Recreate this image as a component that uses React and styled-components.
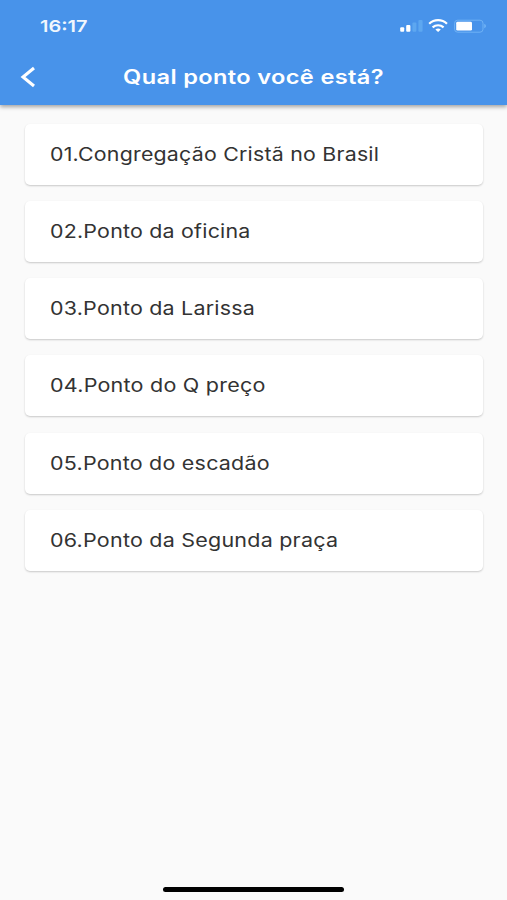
import React from 'react';
import styled, { createGlobalStyle } from 'styled-components';

const points = [
  { id: 1, title: '01.Congregação Cristã no Brasil', stretch: 1.147 },
  { id: 2, title: '02.Ponto da oficina', stretch: 1.149 },
  { id: 3, title: '03.Ponto da Larissa', stretch: 1.152 },
  { id: 4, title: '04.Ponto do Q preço', stretch: 1.157 },
  { id: 5, title: '05.Ponto do escadão', stretch: 1.154 },
  { id: 6, title: '06.Ponto da Segunda praça', stretch: 1.155 },
];

function StatusIcons() {
  return (
    <styles.StatusIcons viewBox="0 0 88 16" aria-hidden="true">
      <g fill="#fff">
        <rect x="1.2" y="9.2" width="4" height="4.6" rx="1" />
        <rect x="7.2" y="7" width="4.2" height="6.8" rx="1" />
        <rect x="13.4" y="4.4" width="4" height="9.4" rx="1" fill="#5da7f0" />
        <rect x="19.4" y="2" width="4.2" height="11.8" rx="1" fill="#5da7f0" />
      </g>
      <g fill="none" stroke="#fff" strokeWidth="2.2">
        <path d="M30.2 5.8C35.2 1 43 1 48 5.8" />
        <path d="M33.6 9.4C36.8 6.5 41.4 6.5 44.6 9.4" />
      </g>
      <path d="M36.4 11.5C38 10.1 40.2 10.1 41.8 11.5L39.1 13.9Z" fill="#fff" />
      <rect x="55.6" y="2.2" width="28.4" height="12" rx="3" fill="none" stroke="#6fb2f5" />
      <rect x="57.2" y="3.8" width="15.8" height="8.8" rx="1.4" fill="#fff" />
      <path d="M85.2 6C87.6 6.6 87.6 9.6 85.2 10.2Z" fill="#6fb2f5" />
    </styles.StatusIcons>
  );
}

function App() {
  return (
    <styles.Screen>
      <GlobalStyle />
      <styles.Header>
        <styles.StatusBar>
          <styles.Clock>16:17</styles.Clock>
          <StatusIcons />
        </styles.StatusBar>
        <styles.NavBar>
          <styles.Back aria-label="Voltar">
            <svg width="16" height="22" viewBox="0 0 16 22">
              <path d="M14 2L3 11L14 20" fill="none" stroke="#fff" strokeWidth="3.1" />
            </svg>
          </styles.Back>
          <styles.Title>Qual ponto você está?</styles.Title>
        </styles.NavBar>
      </styles.Header>
      <styles.List>
        {points.map(({ id, title, stretch }) => (
          <styles.Card key={id}>
            <styles.Label $stretch={stretch}>{title}</styles.Label>
          </styles.Card>
        ))}
      </styles.List>
      <styles.Footer>
        <styles.HomeIndicator />
      </styles.Footer>
    </styles.Screen>
  );
}

const GlobalStyle = createGlobalStyle`
  * {
    box-sizing: border-box;
  }

  body {
    margin: 0;
    background-color: #fafafa;
    font-family: Inter, 'Liberation Sans', sans-serif;
  }
`;

const styles = {
  Screen: styled.div`
    display: flex;
    flex-direction: column;
    height: 900px;
    overflow: hidden;
    background-color: #fafafa;
  `,

  Header: styled.header`
    height: 105px;
    flex-shrink: 0;
    background-color: #4893ea;
    color: #fff;
    box-shadow: 0 2px 4px rgba(0, 0, 0, 0.35);
  `,

  StatusBar: styled.div`
    display: flex;
    align-items: center;
    justify-content: space-between;
    height: 52px;
    padding: 0 20px 0 40px;
  `,

  Clock: styled.span`
    font-size: 16.5px;
    font-weight: 600;
    line-height: 20px;
    opacity: 0.92;
    transform: scaleX(1.21);
    transform-origin: left;
  `,

  StatusIcons: styled.svg`
    width: 88px;
    height: 16px;
  `,

  NavBar: styled.div`
    display: grid;
    grid-template-columns: 40px 1fr 40px;
    align-items: center;
    height: 50px;
  `,

  Back: styled.button`
    display: flex;
    padding: 0 0 0 20px;
    border: 0;
    background: none;
  `,

  Title: styled.h1`
    margin: 0;
    font-size: 19.6px;
    font-weight: 600;
    line-height: 24px;
    letter-spacing: 0.3px;
    text-align: center;
    white-space: nowrap;
    transform: scaleX(1.203);
  `,

  List: styled.ul`
    display: flex;
    flex: 1;
    flex-direction: column;
    gap: 16.3px;
    margin: 0;
    padding: 18.6px 24px 0 25px;
    list-style: none;
  `,

  Card: styled.li`
    display: flex;
    align-items: center;
    height: 61px;
    padding-left: 25px;
    border-radius: 5px;
    background-color: #fff;
    box-shadow: 0 1px 2px rgba(0, 0, 0, 0.2);
  `,

  Label: styled.span`
    padding-bottom: 1px;
    color: #333;
    font-size: 18.6px;
    line-height: 24px;
    letter-spacing: 0.2px;
    white-space: nowrap;
    transform: scaleX(${({ $stretch }) => $stretch});
    transform-origin: left;
  `,

  Footer: styled.footer`
    display: flex;
    justify-content: center;
    height: 13px;
  `,

  HomeIndicator: styled.div`
    width: 181px;
    height: 5px;
    border-radius: 3px;
    background-color: #000;
  `,
};

export default App;
